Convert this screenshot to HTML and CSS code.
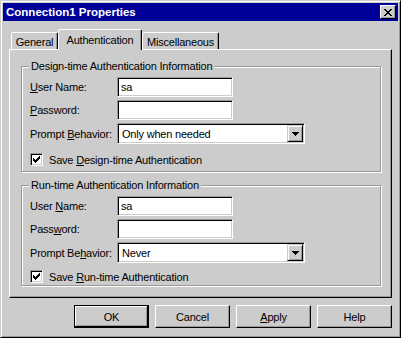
FILE: index.html
```html
<!DOCTYPE html>
<html>
<head>
<meta charset="utf-8">
<link rel="stylesheet" href="styles.css">
</head>
<body>
<div class="window">
  <div class="titlebar">
    <span class="title">Connection1 Properties</span>
    <div class="close">
      <svg width="8" height="7" viewBox="0 0 8 7" shape-rendering="crispEdges"><path fill="#000" d="M0 0h2v1h-2z M6 0h2v1h-2z M1 1h2v1h-2z M5 1h2v1h-2z M2 2h4v1h-4z M3 3h2v1h-2z M2 4h4v1h-4z M1 5h2v1h-2z M5 5h2v1h-2z M0 6h2v1h-2z M6 6h2v1h-2z"/></svg>
    </div>
  </div>
  <div class="tabs">
    <div class="tab tab-general">General</div>
    <div class="tab tab-auth active">Authentication</div>
    <div class="tab tab-misc">Miscellaneous</div>
  </div>
  <div class="panel">
    <div class="group group-design">
      <span class="legend">Design-time Authentication Information</span>
      <div class="field"><span class="label"><u>U</u>ser Name:</span><div class="input">sa</div></div>
      <div class="field"><span class="label"><u>P</u>assword:</span><div class="input"></div></div>
      <div class="field combo-field"><span class="label">Prompt <u>B</u>ehavior:</span>
        <div class="combo"><span class="combo-text">Only when needed</span>
          <div class="drop"><svg width="7" height="4" viewBox="0 0 7 4" shape-rendering="crispEdges"><path fill="#000" d="M0 0h7v1h-7z M1 1h5v1h-5z M2 2h3v1h-3z M3 3h1v1h-1z"/></svg></div>
        </div>
      </div>
      <div class="check-row">
        <div class="checkbox"><svg width="7" height="7" viewBox="0 0 7 7" shape-rendering="crispEdges"><path fill="#000" d="M6 0h1v1h-1z M5 1h2v1h-2z M0 2h1v1h-1z M4 2h3v1h-3z M0 3h2v1h-2z M3 3h3v1h-3z M0 4h5v1h-5z M1 5h3v1h-3z M2 6h1v1h-1z"/></svg></div>
        <span>Save <u>D</u>esign-time Authentication</span>
      </div>
    </div>
    <div class="group group-run">
      <span class="legend">Run-time Authentication Information</span>
      <div class="field"><span class="label">User <u>N</u>ame:</span><div class="input">sa</div></div>
      <div class="field"><span class="label">Pass<u>w</u>ord:</span><div class="input"></div></div>
      <div class="field combo-field"><span class="label">Prompt Be<u>h</u>avior:</span>
        <div class="combo"><span class="combo-text">Never</span>
          <div class="drop"><svg width="7" height="4" viewBox="0 0 7 4" shape-rendering="crispEdges"><path fill="#000" d="M0 0h7v1h-7z M1 1h5v1h-5z M2 2h3v1h-3z M3 3h1v1h-1z"/></svg></div>
        </div>
      </div>
      <div class="check-row">
        <div class="checkbox"><svg width="7" height="7" viewBox="0 0 7 7" shape-rendering="crispEdges"><path fill="#000" d="M6 0h1v1h-1z M5 1h2v1h-2z M0 2h1v1h-1z M4 2h3v1h-3z M0 3h2v1h-2z M3 3h3v1h-3z M0 4h5v1h-5z M1 5h3v1h-3z M2 6h1v1h-1z"/></svg></div>
        <span>Save <u>R</u>un-time Authentication</span>
      </div>
    </div>
  </div>
  <div class="buttons">
    <div class="btn default">OK</div>
    <div class="btn">Cancel</div>
    <div class="btn"><u>A</u>pply</div>
    <div class="btn">Help</div>
  </div>
</div>
</body>
</html>
```
FILE: styles.css
```css
* { box-sizing: border-box; }
body {
  margin: 0;
  background: #cccccc;
  font-family: "Liberation Sans", Arial, sans-serif;
  font-size: 11px;
  letter-spacing: -0.2px;
  color: #000;
}
.window {
  width: 401px;
  height: 338px;
  background: #cccccc;
  border: 1px solid;
  border-color: #cccccc #000 #000 #cccccc;
  box-shadow: inset 1px 1px #fff, inset -1px -1px #999999;
  padding: 2px;
  display: flex;
  flex-direction: column;
}
.titlebar {
  height: 18px;
  flex: none;
  background: #000099;
  display: flex;
  align-items: center;
  justify-content: space-between;
  padding: 0 2px 0 3px;
}
.title {
  color: #fff;
  font-weight: bold;
  font-size: 11.5px;
  letter-spacing: 0;
}
.close {
  width: 16px;
  height: 14px;
  background: #cccccc;
  border: 1px solid;
  border-color: #fff #000 #000 #fff;
  box-shadow: inset -1px -1px #999999;
  display: flex;
  align-items: center;
  justify-content: center;
}
.close svg { display: block; }
.tabs {
  flex: none;
  display: flex;
  align-items: flex-end;
  height: 20px;
  margin-top: 8px;
  padding-left: 8px;
  position: relative;
  z-index: 1;
}
.tab {
  height: 17px;
  background: #cccccc;
  border: 1px solid;
  border-bottom: 0;
  border-color: #fff #000 transparent #fff;
  border-radius: 2px 2px 0 0;
  box-shadow: inset -1px 0 #999999;
  display: flex;
  align-items: center;
  justify-content: center;
  padding-top: 1px;
}
.tab-general { width: 47px; }
.tab-auth { width: 84px; }
.tab-misc { width: 77px; }
.tab.active {
  height: 21px;
  margin-bottom: -1px;
  padding-bottom: 2px;
}
.panel {
  flex: none;
  height: 249px;
  margin: 0 6px;
  border: 1px solid;
  border-color: #fff #000 #000 #fff;
  box-shadow: inset -1px -1px #999999;
  padding: 16px 10px 0 11px;
}
.group {
  position: relative;
  border: 1px solid #999999;
  box-shadow: inset 1px 1px #fff, 1px 1px #fff;
  padding: 10px 0 0 8px;
}
.group-design { height: 106px; }
.group-run { height: 101px; margin-top: 13px; }
.legend {
  position: absolute;
  top: -7px;
  left: 7px;
  padding: 0 2px;
  line-height: 13px;
  background: #cccccc;
}
.field {
  display: flex;
  align-items: center;
  height: 20px;
  margin-bottom: 3px;
}
.combo-field { height: 21px; margin-bottom: 0; }
.label { width: 87px; flex: none; }
.input {
  width: 116px;
  height: 20px;
  background: #fff;
  border: 1px solid;
  border-color: #999999 #fff #fff #999999;
  box-shadow: inset 1px 1px #000, inset -1px -1px #cccccc;
  padding: 0 3px;
  display: flex;
  align-items: center;
}
.combo {
  width: 188px;
  height: 21px;
  background: #fff;
  border: 1px solid;
  border-color: #999999 #fff #fff #999999;
  box-shadow: inset 1px 1px #000, inset -1px -1px #cccccc;
  padding: 1px;
  display: flex;
  align-items: center;
}
.combo-text { flex: 1; padding-left: 3px; }
.drop {
  width: 16px;
  height: 17px;
  background: #cccccc;
  border: 1px solid;
  border-color: #cccccc #000 #000 #cccccc;
  box-shadow: inset 1px 1px #fff, inset -1px -1px #999999;
  display: flex;
  align-items: center;
  justify-content: center;
}
.drop svg, .checkbox svg { display: block; }
.check-row {
  display: flex;
  align-items: center;
  margin-top: 9px;
  height: 13px;
}
.group-run .check-row { margin-top: 7px; }
.checkbox {
  width: 13px;
  height: 13px;
  background: #fff;
  border: 1px solid;
  border-color: #999999 #fff #fff #999999;
  box-shadow: inset 1px 1px #000, inset -1px -1px #cccccc;
  display: flex;
  align-items: center;
  justify-content: center;
  margin-right: 6px;
}
.buttons {
  flex: none;
  display: flex;
  justify-content: flex-end;
  gap: 6px;
  margin-top: 7px;
  padding-right: 6px;
}
.btn {
  width: 75px;
  height: 23px;
  border: 1px solid;
  border-color: #fff #000 #000 #fff;
  box-shadow: inset -1px -1px #999999;
  display: flex;
  align-items: center;
  justify-content: center;
}
.btn.default {
  border-color: #000;
  box-shadow: inset -1px -1px #000, inset 1px 1px #fff, inset -2px -2px #999999;
}
```
